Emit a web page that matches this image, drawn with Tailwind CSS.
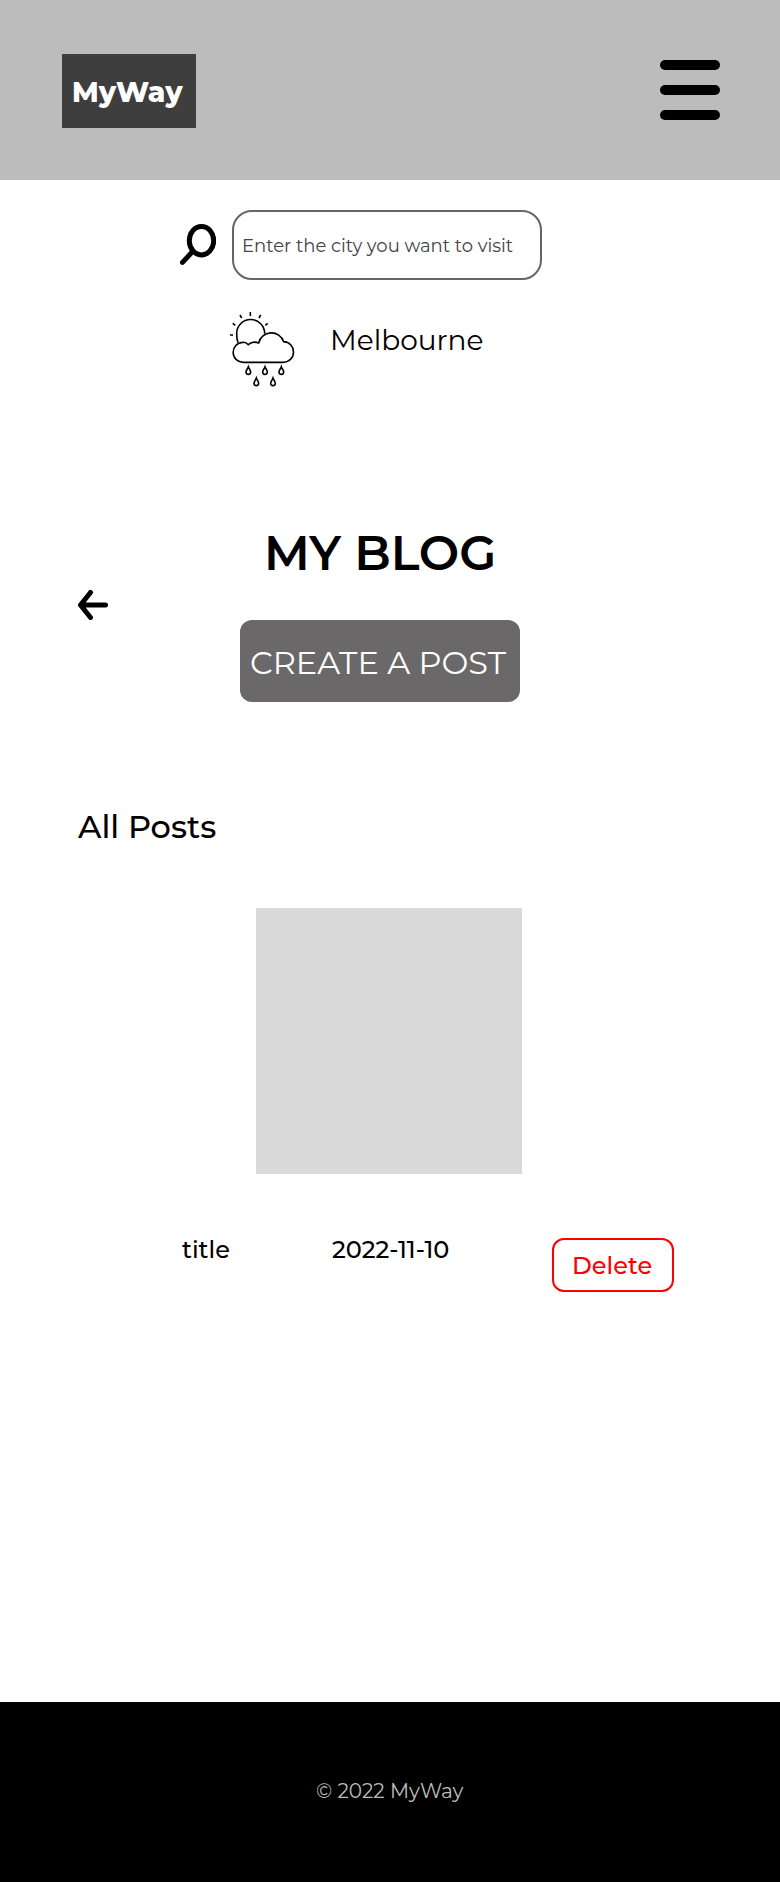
<!DOCTYPE html>
<html lang="en">
<head>
<meta charset="utf-8">
<title>MyWay</title>
<script src="https://cdn.jsdelivr.net/npm/@tailwindcss/browser@4"></script>
</head>
<body class="bg-white text-black font-['Montserrat','Inter',sans-serif]">
<div class="flex h-[1882px] w-[780px] flex-col overflow-hidden whitespace-nowrap">
  <header class="flex h-[180px] shrink-0 items-start justify-between bg-[#bcbcbc] pr-[60px] pl-[62px]">
    <div class="mt-[54px] h-[74px] w-[134px] bg-[#3e3e3e] pl-[10px] text-[28px] leading-[76px] font-extrabold text-white">MyWay</div>
    <button class="mt-[60px] flex w-[60px] flex-col gap-[15px]" aria-label="Menu">
      <span class="h-[10px] w-full rounded-full bg-black"></span>
      <span class="h-[10px] w-full rounded-full bg-black"></span>
      <span class="h-[10px] w-full rounded-full bg-black"></span>
    </button>
  </header>

  <main class="flex flex-1 flex-col">
    <div class="mt-[30px] flex h-[70px] pl-[180px]">
      <svg class="mt-[14px] mr-[16px] h-[41px] w-[36px]" viewBox="0 0 36 41" fill="none" stroke="#000" stroke-width="5">
        <ellipse cx="21.5" cy="16.7" rx="12.2" ry="14.2"/>
        <path d="M12 28.2 2.5 38.4" stroke-linecap="round"/>
      </svg>
      <div class="h-[70px] w-[310px] rounded-[20px] border-2 border-[#666] pl-[8px] text-[18px] leading-[69px] text-[#444]">Enter the city you want to visit</div>
    </div>

    <div class="mt-[20px] flex h-[95px] pl-[220px]">
      <svg class="h-[95px] w-[90px]" viewBox="0 0 270 285" fill="none" stroke="#000" stroke-width="4.8">
        <path d="M54 128Q50 118 50 100A42 42 0 0 1 134 101"/>
        <path d="M70 187A29.5 30 0 0 1 68 127Q78 126 85 134Q98 122 116 129A39 39 0 0 1 191 125A30 31 0 0 1 190 187Z"/>
        <path d="M91 36V48M60 45 65 54M122 45 117 54M38 70 46 76M143 70 136 76M30 105H39"/>
        <path d="M85 200C87 206 92 211 92 216A7 7 0 0 1 78 216C78 211 83 206 85 200Z"/>
        <path d="M135 200C137 206 142 211 142 216A7 7 0 0 1 128 216C128 211 133 206 135 200Z"/>
        <path d="M184 200C186 206 191 211 191 216A7 7 0 0 1 177 216C177 211 182 206 184 200Z"/>
        <path d="M109 234C111 240 116 245 116 250A7 7 0 0 1 102 250C102 245 107 240 109 234Z"/>
        <path d="M159 234C161 240 166 245 166 250A7 7 0 0 1 152 250C152 245 157 240 159 234Z"/>
      </svg>
      <p class="pl-[20px] text-[28px] leading-[80px]">Melbourne</p>
    </div>

    <h1 class="mt-[128px] h-[60px] pl-[264px] text-[48px] leading-[60px] font-semibold">MY BLOG</h1>

    <svg class="mt-[7px] ml-[78px] h-[30px] w-[30px]" viewBox="0 0 30 30" fill="none" stroke="#000" stroke-width="5" stroke-linecap="round" stroke-linejoin="round">
      <path d="M27.5 15H3M12.5 2.5 2.5 15 12.5 27.5"/>
    </svg>

    <button class="ml-[240px] h-[82px] w-[280px] rounded-[12px] bg-[#6a6868] pl-[10px] text-left text-[32px] leading-[85px] text-white">CREATE A POST</button>

    <h2 class="mt-[105px] h-[40px] pl-[78px] text-[32px] leading-[40px] font-medium">All Posts</h2>

    <div class="mt-[61px] ml-[256px] h-[266px] w-[266px] bg-[#d9d9d9]"></div>

    <div class="mt-[64px] flex h-[54px] pl-[182px] text-[24px] leading-[23px] font-medium">
      <p class="w-[150px]">title</p>
      <p class="w-[220px]">2022-11-10</p>
      <button class="h-[54px] w-[122px] rounded-[12px] border-2 border-[#f00] pl-[18px] text-left leading-[51px] text-[#f00]">Delete</button>
    </div>
  </main>

  <footer class="h-[180px] shrink-0 bg-black pl-[316px] text-[20px] leading-[178px] text-[#bcbcbc]">© 2022 MyWay</footer>
</div>
</body>
</html>
